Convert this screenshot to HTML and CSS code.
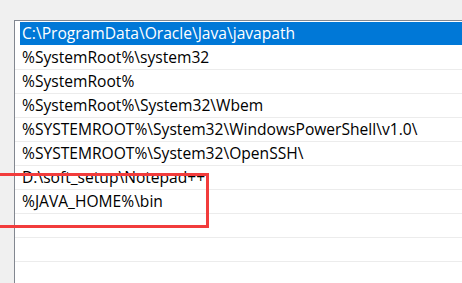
FILE: index.html
```html
<!DOCTYPE html>
<html lang="zh-CN">
   <head>
      <meta charset="UTF-8">
      <link rel="stylesheet" href="styles.css">
      <title>编辑环境变量</title>
   </head>
   <body>
      <div class="list">
         <div class="row selected"><div class="item">C:\ProgramData\Oracle\Java\javapath</div></div>
         <div class="row"><div class="item">%SystemRoot%\system32</div></div>
         <div class="row"><div class="item">%SystemRoot%</div></div>
         <div class="row"><div class="item">%SystemRoot%\System32\Wbem</div></div>
         <div class="row"><div class="item">%SYSTEMROOT%\System32\WindowsPowerShell\v1.0\</div></div>
         <div class="row"><div class="item">%SYSTEMROOT%\System32\OpenSSH\</div></div>
         <div class="row"><div class="item">D:\soft_setup\Notepad++</div></div>
         <div class="row"><div class="item">%JAVA_HOME%\bin</div></div>
         <div class="row"><div class="item"></div></div>
         <div class="row"><div class="item"></div></div>
         <div class="row"><div class="item"></div></div>
      </div>
      <!-- 红框标注 -->
      <div class="mark"></div>
   </body>
</html>
```
FILE: styles.css
```css
body {
margin: 0;
background-color: #f0f0f0;
font-family: "Open Sans", "Noto Sans CJK SC", sans-serif;
font-size: 15.6px;
overflow: hidden;
padding: 20px 0 0 14px;
height: 263px;
}
.list {
background-color: #fff;
border-left: 1px solid #828790;
border-top: 1px solid #828790;
padding-top: 1px;
height: 100%;
}
.row {
height: 23px;
border-bottom: 1px solid #ececec;
padding-left: 5px;
}
.item {
height: 23px;
line-height: 23px;
padding-left: 2px;
color: #000;
white-space: nowrap;
}
.selected {
border-bottom-color: #fff;
}
.selected .item {
background-color: #0078d7;
color: #fff;
}
.mark {
position: absolute;
left: -10px;
top: 173px;
width: 213px;
height: 49px;
border: 3px solid #f23c3c;
}
```
